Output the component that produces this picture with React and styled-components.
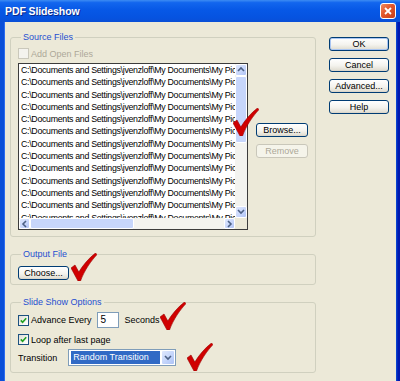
import React from "react";
import styled, { createGlobalStyle } from "styled-components";

const GlobalStyle = createGlobalStyle`
  html, body {
    margin: 0;
    padding: 0;
    background: #ece9d8;
  }
  body {
    font-family: "Liberation Sans", Arial, sans-serif;
    font-size: 9px;
    color: #000;
  }
`;

const Window = styled.div`
  position: relative;
  width: 400px;
  height: 381px;
  display: flex;
  flex-direction: column;
  overflow: hidden;
  background: linear-gradient(to right, #0b4fd8 0, #0b4fd8 396px, #0019b0 398px);
`;

const TitleBar = styled.div`
  height: 22px;
  flex: none;
  display: flex;
  align-items: center;
  justify-content: space-between;
  padding: 0 4px 0 5px;
  background: linear-gradient(
    to bottom,
    #3d8cf3 0%,
    #1266ee 12%,
    #0758e6 45%,
    #0653e0 80%,
    #0a4fd6 100%
  );
`;

const Title = styled.span`
  color: #fff;
  font-weight: bold;
  font-size: 10.5px;
  letter-spacing: -0.1px;
  text-shadow: 1px 1px 0 #0a2a8a;
`;

const CloseButton = styled.div`
  width: 14px;
  height: 14px;
  border: 1px solid #fff;
  border-radius: 3px;
  background: linear-gradient(135deg, #f08a60 0%, #e2562b 45%, #c8401a 100%);
  display: flex;
  align-items: center;
  justify-content: center;
`;

const Body = styled.div`
  flex: 1;
  display: flex;
  margin: 0 4px;
  background: #ece9d8;
  border-left: 1px solid #2c6cf0;
`;

const Main = styled.div`
  width: 306px;
  padding: 10px 0 0 5px;
  display: flex;
  flex-direction: column;
  gap: 12px;
`;

const Side = styled.div`
  display: flex;
  flex-direction: column;
  gap: 7px;
  padding: 15px 0 0 13px;
`;

const Group = styled.fieldset`
  margin: 0;
  padding: 0 6px ${(p) => p.$bottom}px 7px;
  border: 1px solid #d0d0bf;
  border-radius: 3px;
  min-width: 0;
`;

const Legend = styled.legend`
  padding: 0 2px;
  margin-left: 3px;
  line-height: 11px;
  color: #1f4fd0;
`;

const CheckRow = styled.label`
  display: flex;
  align-items: center;
  gap: 2px;
  height: 11px;
  margin-top: ${(p) => p.$top || 0}px;
  color: ${(p) => (p.$disabled ? "#aca899" : "#000")};
`;

const Box = styled.span`
  width: 9px;
  height: 9px;
  flex: none;
  border: 1px solid ${(p) => (p.$disabled ? "#cac8bb" : "#1c5180")};
  background: ${(p) =>
    p.$disabled
      ? "#f4f3ee"
      : "linear-gradient(135deg, #dcdcd5 0%, #f4f4f0 60%, #ffffff 100%)"};
  display: flex;
  align-items: center;
  justify-content: center;
`;

const SourceRow = styled.div`
  display: flex;
  gap: 8px;
  margin-top: 4px;
`;

const ListBox = styled.div`
  width: 228px;
  height: 165px;
  border: 1px solid #3c3c3c;
  background: #fff;
  display: grid;
  grid-template-columns: 1fr 12px;
  grid-template-rows: 1fr 11px;
  overflow: hidden;
`;

const Rows = styled.div`
  overflow: hidden;
  padding-left: 2px;
`;

const Row = styled.div`
  height: 12.3px;
  line-height: 12.3px;
  white-space: nowrap;
  overflow: hidden;
  font-size: 8.8px;
  letter-spacing: -0.3px;
`;

const VScroll = styled.div`
  display: flex;
  flex-direction: column;
  background: #f3f3ef;
`;

const HScroll = styled.div`
  display: flex;
  background: #f3f3ef;
`;

const ScrollBtn = styled.div`
  width: ${(p) => (p.$h ? 11 : 12)}px;
  height: ${(p) => (p.$h ? 11 : 12)}px;
  flex: none;
  box-sizing: border-box;
  border: 1px solid #fff;
  border-radius: 2px;
  background: linear-gradient(135deg, #dfe8fd 0%, #c6d5fb 60%, #b1c4f6 100%);
  display: flex;
  align-items: center;
  justify-content: center;
`;

const Thumb = styled.div`
  box-sizing: border-box;
  border: 1px solid #fff;
  border-radius: 2px;
  background: #c7d6fb;
  ${(p) => (p.$h ? "width: 104px; height: 11px;" : "height: 67px; width: 12px;")}
`;

const Track = styled.div`
  flex: 1;
`;

const Corner = styled.div`
  background: #ece9d8;
`;

const ButtonCol = styled.div`
  display: flex;
  flex-direction: column;
  gap: 7px;
  padding-top: 60px;
`;

const Button = styled.button`
  width: ${(p) => p.$w}px;
  height: 14px;
  padding: 0;
  font-family: inherit;
  font-size: 9px;
  line-height: 12px;
  color: ${(p) => (p.disabled ? "#aca899" : "#000")};
  border: 1px solid ${(p) => (p.disabled ? "#c9c7ba" : "#003c74")};
  border-radius: 3px;
  background: ${(p) =>
    p.disabled
      ? "#f5f4ea"
      : "linear-gradient(to bottom, #ffffff 0%, #f4f3ee 55%, #e3e0d5 90%, #d6d0c5 100%)"};
  box-shadow: ${(p) => (p.$default ? "inset 0 0 0 1px #a9c5f2" : "none")};
`;

const Choose = styled.div`
  margin-top: 6px;
`;

const OptionRow = styled.div`
  display: flex;
  align-items: center;
  height: ${(p) => p.$h}px;
  margin-top: ${(p) => p.$top}px;
`;

const NumberField = styled.div`
  width: 17px;
  height: 14px;
  margin: 0 6px 0 5px;
  border: 1px solid #7f9db9;
  background: #fff;
  padding-left: 3px;
  font-size: 10px;
  line-height: 14px;
`;

const Select = styled.div`
  width: 108px;
  height: 17px;
  margin-left: 11px;
  border: 1px solid #7f9db9;
  background: #fff;
  display: flex;
  align-items: stretch;
  padding: 1px 0 1px 2px;
  gap: 1px;
  box-sizing: border-box;
`;

const Selected = styled.div`
  flex: 1;
  background: #316ac5;
  color: #fff;
  padding-left: 2px;
  line-height: 13px;
`;

const DropBtn = styled.div`
  width: 14px;
  margin-top: -1px;
  margin-bottom: -1px;
  box-sizing: border-box;
  border: 1px solid #fff;
  border-radius: 2px;
  background: linear-gradient(135deg, #dfe8fd 0%, #c1d3fb 60%, #aec3f5 100%);
  display: flex;
  align-items: center;
  justify-content: center;
`;

const Mark = styled.svg`
  position: absolute;
  left: ${(p) => p.$x}px;
  top: ${(p) => p.$y}px;
`;

const files = Array.from(
  { length: 13 },
  () => "C:\\Documents and Settings\\jvenzloff\\My Documents\\My Pictures\\slide.jpg"
);

function Chevron({ dir }) {
  const pts = {
    up: "1,5 4,2 7,5",
    down: "1,2 4,5 7,2",
    left: "5,1 2,4 5,7",
    right: "2,1 5,4 2,7",
  }[dir];
  return (
    <svg width="8" height="8" viewBox="0 0 8 8">
      <polyline points={pts} fill="none" stroke="#4d6185" strokeWidth="1.6" />
    </svg>
  );
}

function Tick() {
  return (
    <svg width="7" height="7" viewBox="0 0 7 7">
      <polyline points="0.8,3.4 2.6,5.3 6.2,1.2" fill="none" stroke="#21a121" strokeWidth="1.6" />
    </svg>
  );
}

function CheckMark({ x, y }) {
  return (
    <Mark $x={x} $y={y} width="26" height="28" viewBox="0 0 26 28">
      <path
        d="M0 15 L4 12 L7.8 19 C12 12 18 5 24.5 0 L26 1.6 C20 8 13.5 17 9.5 28 L7 28 Z"
        fill="#d00000"
        stroke="#9a0000"
        strokeWidth="0.6"
      />
    </Mark>
  );
}

export default function App() {
  return (
    <>
      <GlobalStyle />
      <Window>
        <TitleBar>
          <Title>PDF Slideshow</Title>
          <CloseButton>
            <svg width="8" height="8" viewBox="0 0 8 8">
              <path d="M1 1 L7 7 M7 1 L1 7" stroke="#fff" strokeWidth="1.8" />
            </svg>
          </CloseButton>
        </TitleBar>
        <Body>
          <Main>
            <Group $bottom={6}>
              <Legend>Source Files</Legend>
              <CheckRow $disabled $top={5}>
                <Box $disabled />
                Add Open Files
              </CheckRow>
              <SourceRow>
                <ListBox>
                  <Rows>
                    {files.map((f, i) => (
                      <Row key={i}>{f}</Row>
                    ))}
                  </Rows>
                  <VScroll>
                    <ScrollBtn>
                      <Chevron dir="up" />
                    </ScrollBtn>
                    <Thumb />
                    <Track />
                    <ScrollBtn>
                      <Chevron dir="down" />
                    </ScrollBtn>
                  </VScroll>
                  <HScroll>
                    <ScrollBtn $h>
                      <Chevron dir="left" />
                    </ScrollBtn>
                    <Thumb $h />
                    <Track />
                    <ScrollBtn $h>
                      <Chevron dir="right" />
                    </ScrollBtn>
                  </HScroll>
                  <Corner />
                </ListBox>
                <ButtonCol>
                  <Button $w={52}>Browse...</Button>
                  <Button $w={52} disabled>
                    Remove
                  </Button>
                </ButtonCol>
              </SourceRow>
            </Group>

            <Group $bottom={4}>
              <Legend>Output File</Legend>
              <Choose>
                <Button $w={51}>Choose...</Button>
              </Choose>
            </Group>

            <Group $bottom={6}>
              <Legend>Slide Show Options</Legend>
              <OptionRow $h={16} $top={4}>
                <CheckRow>
                  <Box>
                    <Tick />
                  </Box>
                  Advance Every
                </CheckRow>
                <NumberField>5</NumberField>
                Seconds
              </OptionRow>
              <OptionRow $h={11} $top={6}>
                <CheckRow>
                  <Box>
                    <Tick />
                  </Box>
                  Loop after last page
                </CheckRow>
              </OptionRow>
              <OptionRow $h={17} $top={4}>
                Transition
                <Select>
                  <Selected>Random Transition</Selected>
                  <DropBtn>
                    <Chevron dir="down" />
                  </DropBtn>
                </Select>
              </OptionRow>
            </Group>
          </Main>

          <Side>
            <Button $w={60} $default>
              OK
            </Button>
            <Button $w={60}>Cancel</Button>
            <Button $w={60}>Advanced...</Button>
            <Button $w={60}>Help</Button>
          </Side>
        </Body>

        <CheckMark x={233} y={108} />
        <CheckMark x={71} y={253} />
        <CheckMark x={160} y={302} />
        <CheckMark x={187} y={343} />
      </Window>
    </>
  );
}
